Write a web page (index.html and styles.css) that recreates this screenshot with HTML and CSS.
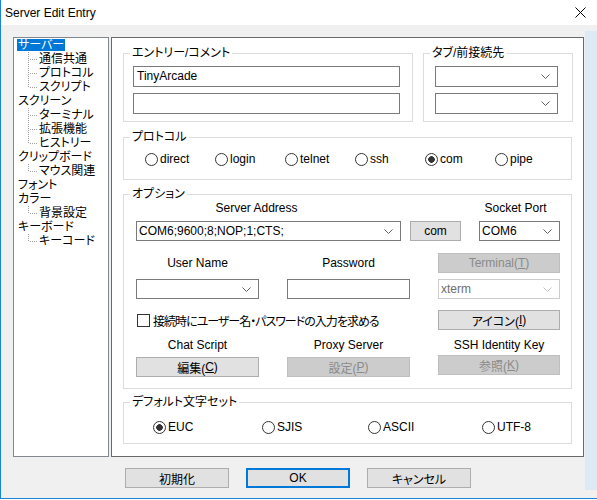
FILE: index.html
```html
<!DOCTYPE html>
<html lang="ja">
<head>
<meta charset="utf-8">
<title>Server Edit Entry</title>
<link rel="stylesheet" href="styles.css">
</head>
<body>
<div class="window">
  <div class="titlebar">
    <span class="title">Server Edit Entry</span>
    <span class="close-btn"><svg width="11" height="11" viewBox="0 0 11 11"><path d="M0.5 0.5L10.5 10.5M10.5 0.5L0.5 10.5" stroke="#000" stroke-width="1" fill="none"/></svg></span>
  </div>
  <div class="frame">
  <div class="client">
    <div class="panes">
      <ul class="tree">
        <li class="node root"><span class="lbl sel">サーバー</span></li>
        <li class="node child"><span class="lbl">通信共通</span></li>
        <li class="node child"><span class="lbl">プロトコル</span></li>
        <li class="node child last"><span class="lbl">スクリプト</span></li>
        <li class="node root"><span class="lbl">スクリーン</span></li>
        <li class="node child"><span class="lbl">ターミナル</span></li>
        <li class="node child"><span class="lbl">拡張機能</span></li>
        <li class="node child last"><span class="lbl">ヒストリー</span></li>
        <li class="node root"><span class="lbl">クリップボード</span></li>
        <li class="node child last"><span class="lbl">マウス関連</span></li>
        <li class="node root"><span class="lbl">フォント</span></li>
        <li class="node root"><span class="lbl">カラー</span></li>
        <li class="node child last"><span class="lbl">背景設定</span></li>
        <li class="node root"><span class="lbl">キーボード</span></li>
        <li class="node child last"><span class="lbl">キーコード</span></li>
      </ul>
      <div class="page">
        <div class="row-top">
          <fieldset class="grp grp-entry">
            <legend>エントリー/コメント</legend>
            <div class="body-entry">
              <div class="edit">TinyArcade</div>
              <div class="edit"></div>
            </div>
          </fieldset>
          <fieldset class="grp grp-tab">
            <legend>タブ/前接続先</legend>
            <div class="body-tab">
              <div class="combo"><span class="val"></span><svg class="arrow" width="9" height="5" viewBox="0 0 9 5"><path d="M0.5 0.5L4.5 4.5L8.5 0.5" fill="none" stroke="#606060" stroke-width="1"/></svg></div>
              <div class="combo"><span class="val"></span><svg class="arrow" width="9" height="5" viewBox="0 0 9 5"><path d="M0.5 0.5L4.5 4.5L8.5 0.5" fill="none" stroke="#606060" stroke-width="1"/></svg></div>
            </div>
          </fieldset>
        </div>

        <fieldset class="grp grp-proto">
          <legend>プロトコル</legend>
          <div class="body-proto">
            <span class="opt"><span class="radio"></span>direct</span>
            <span class="opt"><span class="radio"></span>login</span>
            <span class="opt"><span class="radio"></span>telnet</span>
            <span class="opt"><span class="radio"></span>ssh</span>
            <span class="opt"><span class="radio on"></span>com</span>
            <span class="opt"><span class="radio"></span>pipe</span>
          </div>
        </fieldset>

        <fieldset class="grp grp-opt">
          <legend>オプション</legend>
          <div class="body-opt">
            <div class="addr-labels">
              <span class="cap cap-addr">Server Address</span>
              <span class="cap cap-gap"></span>
              <span class="cap cap-port">Socket Port</span>
            </div>
            <div class="addr-row">
              <div class="combo combo-addr"><span class="val">COM6;9600;8;NOP;1;CTS;</span><svg class="arrow" width="9" height="5" viewBox="0 0 9 5"><path d="M0.5 0.5L4.5 4.5L8.5 0.5" fill="none" stroke="#606060" stroke-width="1"/></svg></div>
              <button class="btn btn-com">com</button>
              <div class="combo combo-port"><span class="val">COM6</span><svg class="arrow" width="9" height="5" viewBox="0 0 9 5"><path d="M0.5 0.5L4.5 4.5L8.5 0.5" fill="none" stroke="#606060" stroke-width="1"/></svg></div>
            </div>
            <div class="orow orow-c">
              <span class="cap">User Name</span>
              <span class="cap">Password</span>
              <button class="btn dis">Terminal(<u>T</u>)</button>
            </div>
            <div class="orow orow-d">
              <div class="combo small"><span class="val"></span><svg class="arrow" width="9" height="5" viewBox="0 0 9 5"><path d="M0.5 0.5L4.5 4.5L8.5 0.5" fill="none" stroke="#606060" stroke-width="1"/></svg></div>
              <div class="edit small"></div>
              <div class="combo small dis"><span class="val">xterm</span><svg class="arrow" width="9" height="5" viewBox="0 0 9 5"><path d="M0.5 0.5L4.5 4.5L8.5 0.5" fill="none" stroke="#c0c0c0" stroke-width="1"/></svg></div>
            </div>
            <div class="orow orow-e">
              <label class="check"><span class="box"></span><span class="check-text">接続時にユーザー名・パスワードの入力を求める</span></label>
              <button class="btn">アイコン(<u>I</u>)</button>
            </div>
            <div class="orow orow-f">
              <span class="cap">Chat Script</span>
              <span class="cap">Proxy Server</span>
              <span class="cap">SSH Identity Key</span>
            </div>
            <div class="orow orow-g">
              <button class="btn">編集(<u>C</u>)</button>
              <button class="btn dis">設定(<u>P</u>)</button>
              <button class="btn dis btn-up">参照(<u>K</u>)</button>
            </div>
          </div>
        </fieldset>

        <fieldset class="grp grp-cs">
          <legend>デフォルト文字セット</legend>
          <div class="body-cs">
            <span class="opt"><span class="radio on"></span>EUC</span>
            <span class="opt"><span class="radio"></span>SJIS</span>
            <span class="opt"><span class="radio"></span>ASCII</span>
            <span class="opt"><span class="radio"></span>UTF-8</span>
          </div>
        </fieldset>
      </div>
    </div>
    <div class="footer">
      <button class="btn btn-dlg">初期化</button>
      <button class="btn btn-dlg btn-ok">OK</button>
      <button class="btn btn-dlg">キャンセル</button>
    </div>
  </div>
  <div class="edge"></div>
  </div>
</div>
</body>
</html>
```

FILE: styles.css
```css
* { box-sizing: border-box; }
html, body { margin: 0; padding: 0; }
body {
  width: 597px;
  height: 500px;
  overflow: hidden;
  background: #ffffff;
  font-family: "Liberation Sans", "Noto Sans CJK JP", sans-serif;
  font-size: 12px;
  color: #000;
  font-feature-settings: "palt";
}
.window {
  width: 603px;
  height: 499px;
  background: #f0f0f0;
  border-left: 1px solid #1883d7;
  border-bottom: 1px solid #1883d7;
  display: flex;
  flex-direction: column;
}
.titlebar {
  height: 25px;
  flex: none;
  background: #ffffff;
  display: flex;
  align-items: center;
}
.title { padding-left: 4px; font-size: 12px; }
.close-btn {
  margin-left: auto;
  width: 46px;
  height: 25px;
  display: flex;
  align-items: center;
  justify-content: center;
}
.frame { flex: 1; display: flex; }
.edge { flex: 1; margin-top: 6px; margin-bottom: 8px; background: #dceaf6; }
.client {
  width: 584px;
  flex: none;
  padding: 12px 0 0 12px;
  display: flex;
  flex-direction: column;
}
.panes { display: flex; gap: 2px; height: 420px; flex: none; }

/* tree */
.tree {
  width: 96px;
  height: 420px;
  margin: 0;
  padding: 0;
  list-style: none;
  background: #ffffff;
  border: 1px solid #828790;
}
.node {
  height: 14px;
  display: flex;
  align-items: center;
  white-space: nowrap;
}
.root { padding-left: 3px; }
.child {
  padding-left: 24px;
  background:
    repeating-linear-gradient(to bottom, #a0a0a0 0 1px, transparent 1px 2px) 14px 0 / 1px 100% no-repeat,
    repeating-linear-gradient(to right, #a0a0a0 0 1px, transparent 1px 2px) 16px 7px / 8px 1px no-repeat;
}
.child.last {
  background:
    repeating-linear-gradient(to bottom, #a0a0a0 0 1px, transparent 1px 2px) 14px 0 / 1px 8px no-repeat,
    repeating-linear-gradient(to right, #a0a0a0 0 1px, transparent 1px 2px) 16px 7px / 8px 1px no-repeat;
}
.lbl { display: inline-block; padding: 0 1px; line-height: 12px; height: 12px; }
.sel { background: #0078d7; color: #ffffff; }

/* property page */
.page {
  width: 473px;
  height: 420px;
  background: #ffffff;
  border: 1px solid #696969;
  padding: 8px 0 0 11px;
  display: flex;
  flex-direction: column;
}
.row-top { display: flex; gap: 10px; }
.grp {
  margin: 0;
  padding: 0;
  min-width: 0;
  border: 1px solid #dcdcdc;
}
.grp > legend {
  margin-left: 6px;
  padding: 0 2px;
  height: 14px;
  line-height: 14px;
}
.grp-entry { width: 290px; }
.grp-tab { width: 150px; }
.body-entry { padding: 6px 12px 7px 9px; }
.body-tab { padding: 6px 14px 7px 11px; }

.edit {
  height: 21px;
  border: 1px solid #7a7a7a;
  background: #ffffff;
  padding: 0 3px;
  line-height: 19px;
  white-space: nowrap;
}
.edit + .edit { margin-top: 6px; }
.combo {
  height: 21px;
  border: 1px solid #7a7a7a;
  background: #ffffff;
  display: flex;
  align-items: center;
  padding: 0 7px 0 2px;
}
.combo + .combo { margin-top: 6px; }
.combo .val { flex: 1; white-space: nowrap; overflow: hidden; }
.arrow { flex: none; }
.combo.dis { border-color: #cccccc; color: #6d6d6d; }
.small { height: 20px; }

.grp-proto, .grp-opt { width: 449px; }
.grp-proto { margin-top: 8px; }
.body-proto {
  display: grid;
  grid-template-columns: repeat(6, 70px);
  padding: 8px 0 13px 21px;
}
.opt {
  display: flex;
  align-items: center;
  gap: 2px;
  height: 14px;
  white-space: nowrap;
}
.radio {
  width: 13px;
  height: 13px;
  flex: none;
  border: 1px solid #333333;
  border-radius: 50%;
  background: #ffffff;
}
.radio.on { background: radial-gradient(circle, #333333 0 3px, #ffffff 3.6px); }

.btn {
  height: 20px;
  margin: 0;
  padding: 0;
  font: inherit;
  color: #000;
  background: #e1e1e1;
  border: 1px solid #adadad;
  display: flex;
  align-items: center;
  justify-content: center;
  white-space: nowrap;
}
.btn.dis { background: #cccccc; border-color: #bfbfbf; color: #8a8a8a; }
.btn-up { position: relative; top: -2px; }

.grp-opt { margin-top: 7px; }
.body-opt { padding: 0 0 11px 12px; }
.addr-labels { display: flex; height: 14px; line-height: 14px; }
.cap { text-align: center; white-space: nowrap; }
.cap-addr { width: 265px; padding-right: 24px; }
.cap-gap { width: 79px; }
.cap-port { width: 81px; padding-right: 10px; }
.addr-row { display: flex; margin-top: 6px; height: 20px; }
.addr-row .combo-addr { width: 265px; height: 20px; }
.addr-row .btn-com { width: 51px; margin-left: 9px; }
.addr-row .combo-port { width: 81px; height: 20px; margin-left: 18px; margin-top: 0; }

.orow {
  display: grid;
  grid-template-columns: 123px 123px 122px;
  column-gap: 28px;
  height: 20px;
  align-items: center;
}
.orow-c { margin-top: 12px; }
.orow-d { margin-top: 6px; }
.orow-e { margin-top: 11px; }
.orow-f { margin-top: 8px; height: 14px; }
.orow-g { margin-top: 5px; }
.check {
  grid-column: 1 / 3;
  display: flex;
  align-items: center;
  gap: 3px;
  padding-left: 1px;
  white-space: nowrap;
}
.check-text { letter-spacing: -1px; }
.box {
  width: 13px;
  height: 13px;
  flex: none;
  border: 1px solid #333333;
  background: #ffffff;
}

.grp-cs { width: 449px; margin-top: 6px; }
.body-cs {
  display: grid;
  grid-template-columns: 109px 106px 114px 80px;
  padding: 11px 0 9px 29px;
}

.footer {
  display: flex;
  gap: 17px;
  padding: 11px 0 0 112px;
}
.btn-dlg { width: 104px; height: 20px; }
.btn-ok { border: 2px solid #0078d7; }
```
